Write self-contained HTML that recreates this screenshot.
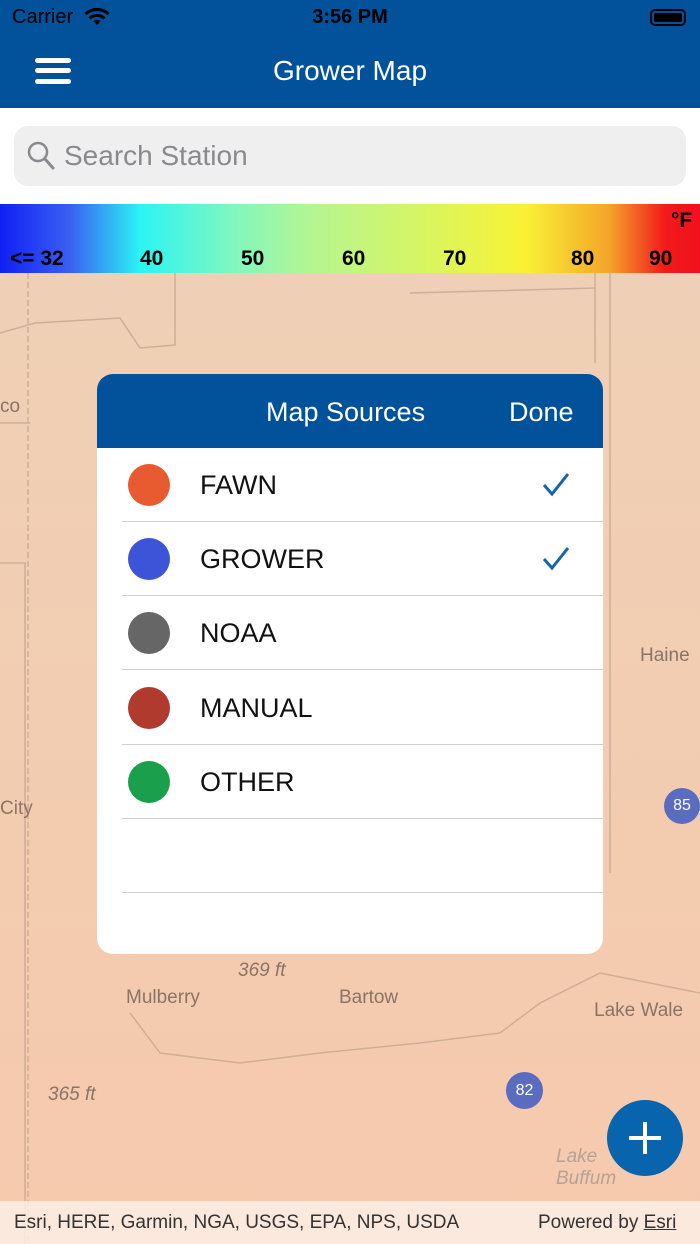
<!DOCTYPE html>
<html><head><meta charset="utf-8"><style>
*{margin:0;padding:0;box-sizing:border-box}
body{width:700px;height:1244px;overflow:hidden;position:relative;font-family:"Liberation Sans",sans-serif;background:#f3cfb4}
.map{position:absolute;left:0;top:273px;width:700px;height:971px;background:linear-gradient(180deg,#efd0b6 0%,#f3ccb0 60%,#f6c9ad 100%)}
.top{position:absolute;left:0;top:0;width:700px;height:108px;background:#01529b}
.sb{position:absolute;top:6px;font-size:20px;color:#000}
.title{position:absolute;top:55px;width:700px;text-align:center;color:#fff;font-size:28px}
.ham{position:absolute;left:35px;width:36px;height:5px;background:#fff;border-radius:3px}
.sw{position:absolute;left:0;top:108px;width:700px;height:96px;background:#fff}
.search{position:absolute;left:14px;top:126px;width:672px;height:60px;background:#efefef;border-radius:14px}
.search span{position:absolute;left:50px;top:14px;font-size:28px;color:#8a8a8e}
.scale{position:absolute;left:0;top:204px;width:700px;height:69px;background:linear-gradient(90deg,#1020f5 0%,#3a60f2 10%,#2af4f4 20%,#7ef7c0 33%,#b7f590 45%,#ddf55a 63%,#f9f234 75%,#f4a52a 87%,#f21a1a 95%,#f2101e 100%)}
.scale b{position:absolute;top:43px;font-size:21px;color:#000}
.dlg{position:absolute;left:97px;top:374px;width:506px;height:580px;background:#fff;border-radius:16px;overflow:hidden}
.dh{height:74px;background:#01529b;color:#fff;font-size:27px;position:relative}
.row{position:absolute;left:0;width:506px;height:74px}
.row .sep{position:absolute;left:25px;right:0;bottom:0;height:1px;background:#d0d0d4}
.dot{position:absolute;left:31px;top:16px;width:42px;height:42px;border-radius:50%}
.lbl{position:absolute;left:103px;top:22px;font-size:27px;color:#111}
.foot{position:absolute;left:0;top:1201px;width:700px;height:43px;background:rgba(250,238,228,.85);font-size:19px;color:#333}
.maptxt{position:absolute;color:#8a7466;font-size:19px}
</style></head><body>
<div class="map">
<svg width="700" height="971" style="position:absolute;left:0;top:0" fill="none" stroke="#b89a86" stroke-width="1.5" opacity=".6">
<path d="M28 0V971" stroke-dasharray="6 3"/>
<path d="M0 60L35 50 120 45 140 75 175 72 175 0"/>
<path d="M410 20L595 15 595 0"/><path d="M595 15V90"/>
<path d="M0 150L30 150M0 290H25V971"/>
<path d="M130 740L160 780 240 790 320 780 420 770 500 760 540 730 600 700 700 720"/>
<path d="M610 0V600"/>
</svg>
<div class="maptxt" style="left:0;top:123px">co</div>
<div class="maptxt" style="left:640px;top:372px">Haine</div>
<div class="maptxt" style="left:0;top:525px">City</div>
<div class="maptxt" style="left:126px;top:714px">Mulberry</div>
<div class="maptxt" style="left:339px;top:714px">Bartow</div>
<div class="maptxt" style="left:238px;top:687px;font-style:italic">369 ft</div>
<div class="maptxt" style="left:594px;top:727px">Lake Wale</div>
<div class="maptxt" style="left:48px;top:811px;font-style:italic">365 ft</div>
<div class="maptxt" style="left:556px;top:873px;font-style:italic;color:#b7a296">Lake<br>Buffum</div>
</div>
<div style="position:absolute;left:664px;top:788px;width:36px;height:36px;border-radius:50%;background:#5a6cc0;color:#fff;font-size:16px;text-align:center;line-height:36px">85</div>
<div style="position:absolute;left:506px;top:1072px;width:37px;height:37px;border-radius:50%;background:#5a6cc0;color:#fff;font-size:16px;text-align:center;line-height:37px">82</div>
<div style="position:absolute;left:607px;top:1100px;width:76px;height:76px;border-radius:50%;background:#0764ad">
<div style="position:absolute;left:22px;top:36px;width:32px;height:4px;background:#fff"></div>
<div style="position:absolute;left:36px;top:22px;width:4px;height:32px;background:#fff"></div></div>

<div class="top">
<div class="sb" style="left:12px">Carrier</div>
<svg style="position:absolute;left:84px;top:8px" width="26" height="18" viewBox="0 0 26 18"><path d="M13 17l3.5-4a5 5 0 0 0-7 0z M13 9a9 9 0 0 1 6.5 2.6l2-2.2a12 12 0 0 0-17 0l2 2.2A9 9 0 0 1 13 9z M13 3a15 15 0 0 1 10.5 4.2l2-2.2a18 18 0 0 0-25 0l2 2.2A15 15 0 0 1 13 3z" fill="#000"/></svg>
<div class="sb" style="left:0;width:700px;text-align:center;font-weight:bold">3:56 PM</div>
<div style="position:absolute;left:650px;top:9px;width:36px;height:17px;border:2px solid #000;border-radius:5px;padding:2px"><div style="width:100%;height:100%;background:#000;border-radius:2px"></div></div>
<div class="ham" style="top:58px"></div><div class="ham" style="top:68px"></div><div class="ham" style="top:79px"></div>
<div class="title">Grower Map</div>
</div>
<div class="sw"></div>
<div class="search"><svg style="position:absolute;left:13px;top:15px" width="28" height="30" viewBox="0 0 28 30"><circle cx="11" cy="11" r="9" fill="none" stroke="#8a8a8e" stroke-width="2.5"/><path d="M18 18l8 9" stroke="#8a8a8e" stroke-width="3" stroke-linecap="round"/></svg><span>Search Station</span></div>
<div class="scale">
<b style="left:671px;top:5px">°F</b>
<b style="left:10px">&lt;= 32</b><b style="left:140px">40</b><b style="left:241px">50</b><b style="left:342px">60</b><b style="left:443px">70</b><b style="left:571px">80</b><b style="left:649px">90</b>
</div>
<div class="dlg">
<div class="dh"><span style="position:absolute;left:169px;top:23px">Map Sources</span><span style="position:absolute;left:412px;top:23px">Done</span></div>
<div class="row" style="top:74px"><div class="dot" style="background:#e85b30"></div><div class="lbl">FAWN</div><svg style="position:absolute;left:444px;top:24px" width="30" height="26"><path d="M3 13l8 9 16-20" fill="none" stroke="#1565a8" stroke-width="3"/></svg><div class="sep"></div></div>
<div class="row" style="top:148px"><div class="dot" style="background:#3d54d8"></div><div class="lbl">GROWER</div><svg style="position:absolute;left:444px;top:24px" width="30" height="26"><path d="M3 13l8 9 16-20" fill="none" stroke="#1565a8" stroke-width="3"/></svg><div class="sep"></div></div>
<div class="row" style="top:222px"><div class="dot" style="background:#666"></div><div class="lbl">NOAA</div><div class="sep"></div></div>
<div class="row" style="top:297px"><div class="dot" style="background:#b03a2e"></div><div class="lbl">MANUAL</div><div class="sep"></div></div>
<div class="row" style="top:371px"><div class="dot" style="background:#1aa04c"></div><div class="lbl">OTHER</div><div class="sep"></div></div>
<div class="row" style="top:445px"><div class="sep"></div></div>
</div>
<div class="foot"><span style="position:absolute;left:14px;top:11px">Esri, HERE, Garmin, NGA, USGS, EPA, NPS, USDA</span><span style="position:absolute;left:538px;top:11px">Powered by <u>Esri</u></span></div>
</body></html>
